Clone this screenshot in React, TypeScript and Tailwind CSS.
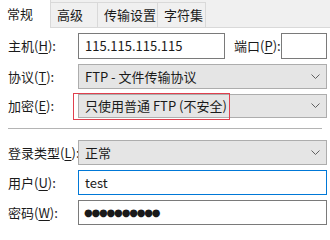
const font = "font-['Microsoft_YaHei','Noto_Sans_CJK_SC',sans-serif]";

function Chevron() {
  return (
    <svg width="9" height="6" viewBox="0 0 9 6" className="shrink-0">
      <polyline points="0.5,0.5 4.5,4.5 8.5,0.5" fill="none" stroke="#606060" strokeWidth="1" />
    </svg>
  );
}

function Label({ text, hotkey, suffix = "):" }: { text: string; hotkey: string; suffix?: string }) {
  return (
    <span className="whitespace-nowrap">
      {text}(<span className="underline underline-offset-2">{hotkey}</span>{suffix}
    </span>
  );
}

function Select({ value, className = "" }: { value: string; className?: string }) {
  return (
    <div
      className={`flex flex-1 items-center justify-between border border-[#adadad] bg-[#e5e5e5] pl-[6px] pr-[6px] ${className}`}
    >
      <span>{value}</span>
      <Chevron />
    </div>
  );
}

export default function App() {
  const tabs = [
    { label: "高级", w: "w-[47px]" },
    { label: "传输设置", w: "w-[60px]" },
    { label: "字符集", w: "w-[48px]" },
  ];
  return (
    <div className={`w-[330px] h-[230px] overflow-hidden bg-white text-[13px] text-[#1a1a1a] ${font}`}>
      {/* tab strip */}
      <div className="flex h-[28px] items-end border-b border-[#d9d9d9] bg-[#f0f0f0]">
        <div className="-mb-px flex h-[29px] w-[51px] items-center border-r border-[#d9d9d9] bg-white pl-[7px]">
          常规
        </div>
        {tabs.map((t) => (
          <div
            key={t.label}
            className={`flex h-[25px] items-center border-t border-r border-[#d9d9d9] bg-[#f0f0f0] pl-[6px] ${t.w}`}
          >
            {t.label}
          </div>
        ))}
      </div>

      <div className="relative flex flex-col pl-[8px] pr-[3px] pt-[5px]">
        {/* host / port */}
        <div className="flex h-[26px] items-center">
          <div className="w-[70px]">
            <Label text="主机" hotkey="H" />
          </div>
          <div className="flex h-full w-[147px] items-center border border-[#7a7a7a] pl-[6px]">115.115.115.115</div>
          <div className="ml-[9px] w-[47px]">
            <Label text="端口" hotkey="P" />
          </div>
          <div className="h-full flex-1 border border-[#7a7a7a]" />
        </div>

        {/* protocol */}
        <div className="mt-[5px] flex h-[25px] items-center">
          <div className="w-[70px]">
            <Label text="协议" hotkey="T" />
          </div>
          <Select value="FTP - 文件传输协议" className="h-full" />
        </div>

        {/* encryption */}
        <div className="mt-[4px] flex h-[26px] items-center">
          <div className="w-[70px]">
            <Label text="加密" hotkey="E" />
          </div>
          <Select value="只使用普通 FTP (不安全)" className="h-[24px]" />
        </div>
        {/* red annotation box */}
        <div className="pointer-events-none absolute left-[73px] top-[65px] h-[27px] w-[157px] shadow-[inset_0_0_0_1px_#e0404e]" />

        <div className="mt-[9px] mr-[5px] border-t border-[#b4b4b4]" />

        {/* login type */}
        <div className="mt-[11px] flex h-[25px] items-center">
          <div className="w-[70px]">
            <Label text="登录类型" hotkey="L" />
          </div>
          <Select value="正常" className="h-full" />
        </div>

        {/* user */}
        <div className="mt-[5px] flex h-[25px] items-center">
          <div className="w-[70px]">
            <Label text="用户" hotkey="U" />
          </div>
          <div className="flex h-full flex-1 items-center border border-[#0078d7] pl-[6px]">test</div>
        </div>

        {/* password */}
        <div className="mt-[5px] flex h-[25px] items-center">
          <div className="w-[70px]">
            <Label text="密码" hotkey="W" />
          </div>
          <div className="flex h-full flex-1 items-center border border-[#7a7a7a] pl-[5px] font-['DejaVu_Sans',sans-serif] text-[10px] tracking-[-1.2px]">
            ●●●●●●●●●●
          </div>
        </div>
      </div>
    </div>
  );
}
